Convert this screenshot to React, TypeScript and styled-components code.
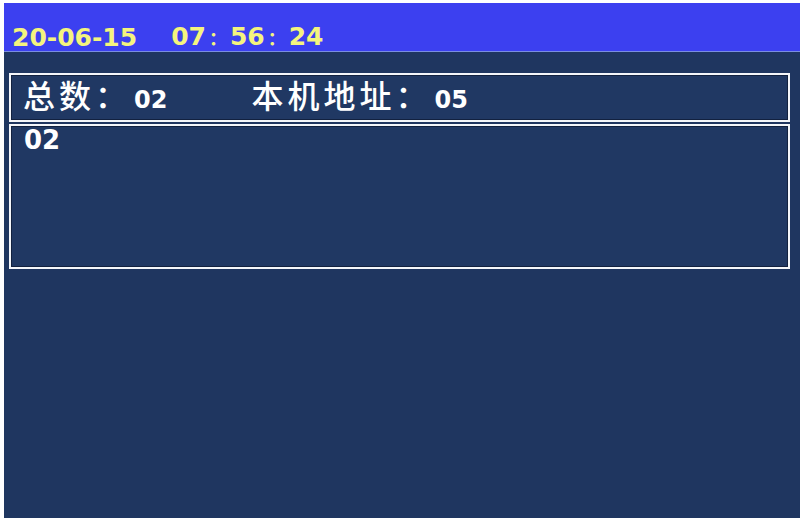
import React from 'react';
import styled, { createGlobalStyle } from 'styled-components';

const GlobalStyle = createGlobalStyle`
  html, body {
    margin: 0;
    padding: 0;
    background: #ffffff;
  }
`;

const Screen = styled.div`
  margin: 3px 0 0 4px;
  width: 796px;
  height: 515px;
  background: #1f3660;
  display: flex;
  flex-direction: column;
  overflow: hidden;
`;

const Header = styled.div`
  height: 49px;
  background: #3c40f0;
  border-bottom: 1px solid #7b8ee0;
  display: flex;
  align-items: flex-end;
  padding: 0 0 0 8px;
  box-sizing: border-box;
`;

const Clock = styled.span<{ $gap?: number }>`
  font-family: 'DejaVu Sans', 'Noto Sans CJK SC', sans-serif;
  font-weight: bold;
  font-size: 25px;
  line-height: 27px;
  color: #f4f47e;
  margin-right: ${({ $gap }) => $gap ?? 0}px;
`;

const Colon = styled.span`
  font-family: 'Noto Sans CJK SC', sans-serif;
  font-weight: bold;
  font-size: 18px;
  margin: 0 3px;
`;

const Content = styled.div`
  display: flex;
  flex-direction: column;
  gap: 2px;
  padding: 21px 10px 0 5px;
`;

const Box = styled.div<{ $height: number }>`
  height: ${({ $height }) => $height}px;
  box-sizing: border-box;
  border: 2px solid #f4f6fa;
  outline: 1px solid #12213f;
  outline-offset: -3px;
  background: #203863;
  display: flex;
  align-items: flex-start;
`;

const InfoRow = styled.div`
  display: flex;
  align-items: baseline;
  height: 38px;
  padding-left: 12px;
  color: #ffffff;
`;

const Label = styled.span`
  font-family: 'Noto Sans CJK SC', sans-serif;
  font-size: 32px;
  font-weight: 500;
  letter-spacing: 4px;
  line-height: 38px;
`;

const Value = styled.span<{ $gap?: number }>`
  font-family: 'DejaVu Sans', sans-serif;
  font-weight: bold;
  font-size: 24px;
  line-height: 38px;
  margin-left: 3px;
  margin-right: ${({ $gap }) => $gap ?? 0}px;
`;

const ListItem = styled.div`
  font-family: 'DejaVu Sans', sans-serif;
  font-weight: bold;
  font-size: 26px;
  line-height: 28px;
  color: #ffffff;
  padding: 0 0 0 13px;
`;

export default function App() {
  return (
    <>
      <GlobalStyle />
      <Screen>
        <Header>
          <Clock $gap={34}>20-06-15</Clock>
          <Clock>
            07<Colon>：</Colon>56<Colon>：</Colon>24
          </Clock>
        </Header>
        <Content>
          <Box $height={49}>
            <InfoRow>
              <Label>总数：</Label>
              <Value $gap={84}>02</Value>
              <Label>本机地址：</Label>
              <Value>05</Value>
            </InfoRow>
          </Box>
          <Box $height={145}>
            <ListItem>02</ListItem>
          </Box>
        </Content>
      </Screen>
    </>
  );
}
